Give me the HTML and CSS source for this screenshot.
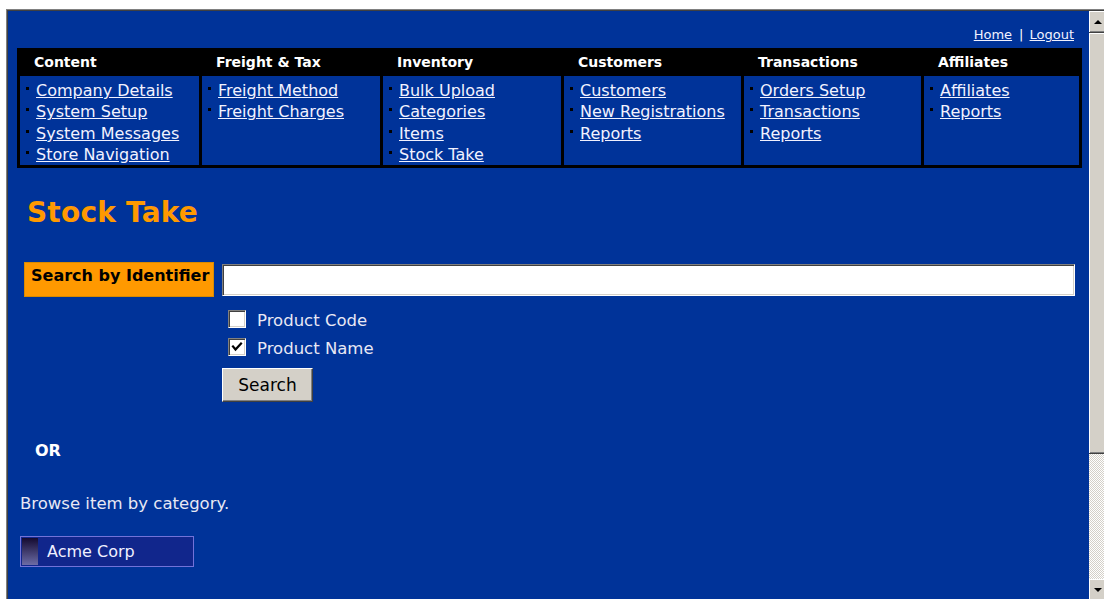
FILE: index.html
```html
<!DOCTYPE html>
<html lang="en">
<head>
<meta charset="utf-8">
<title>Stock Take</title>
<link rel="stylesheet" href="styles.css">
</head>
<body>
<div class="frame">
  <div class="frame-inner">
    <div class="page">
      <div class="toplinks"><a href="#">Home</a><span class="sep">|</span><a href="#">Logout</a></div>

      <div class="nav">
        <div class="nav-head">Content</div>
        <div class="nav-head">Freight &amp; Tax</div>
        <div class="nav-head">Inventory</div>
        <div class="nav-head">Customers</div>
        <div class="nav-head">Transactions</div>
        <div class="nav-head">Affiliates</div>

        <ul class="nav-cell">
          <li><a href="#">Company Details</a></li>
          <li><a href="#">System Setup</a></li>
          <li><a href="#">System Messages</a></li>
          <li><a href="#">Store Navigation</a></li>
        </ul>
        <ul class="nav-cell">
          <li><a href="#">Freight Method</a></li>
          <li><a href="#">Freight Charges</a></li>
        </ul>
        <ul class="nav-cell">
          <li><a href="#">Bulk Upload</a></li>
          <li><a href="#">Categories</a></li>
          <li><a href="#">Items</a></li>
          <li><a href="#">Stock Take</a></li>
        </ul>
        <ul class="nav-cell">
          <li><a href="#">Customers</a></li>
          <li><a href="#">New Registrations</a></li>
          <li><a href="#">Reports</a></li>
        </ul>
        <ul class="nav-cell">
          <li><a href="#">Orders Setup</a></li>
          <li><a href="#">Transactions</a></li>
          <li><a href="#">Reports</a></li>
        </ul>
        <ul class="nav-cell">
          <li><a href="#">Affiliates</a></li>
          <li><a href="#">Reports</a></li>
        </ul>
      </div>

      <h1 class="title">Stock Take</h1>

      <div class="search-row">
        <label class="search-label" for="ident">Search by Identifier</label>
        <input class="search-input" id="ident" type="text">
      </div>

      <div class="search-options">
        <label class="option">
          <span class="box"></span>
          <span class="option-text">Product Code</span>
        </label>
        <label class="option">
          <span class="box"><svg viewBox="0 0 14 14" width="14" height="14"><polyline points="3,6.5 5.5,9.5 11,3.5" fill="none" stroke="#000" stroke-width="2.2" stroke-linecap="square"/></svg></span>
          <span class="option-text">Product Name</span>
        </label>
        <button class="search-btn" type="button">Search</button>
      </div>

      <p class="or">OR</p>
      <p class="browse">Browse item by category.</p>

      <div class="category">
        <span class="cat-icon"></span>
        <span class="cat-name">Acme Corp</span>
      </div>
    </div>

    <div class="scrollbar">
      <div class="sb-btn"><span class="arrow-up"></span></div>
      <div class="sb-thumb"></div>
      <div class="sb-track"></div>
      <div class="sb-btn"><span class="arrow-down"></span></div>
    </div>
  </div>
</div>
</body>
</html>
```

FILE: styles.css
```css
html, body {
  margin: 0;
  padding: 0;
  background: #ffffff;
  overflow: hidden;
}

/* sunken frame holding the admin page */
.frame {
  margin: 9px 0 0 6px;
  width: 1100px;
  box-sizing: border-box;
  border-top: 1px solid #808080;
  border-left: 1px solid #808080;
}

.frame-inner {
  display: flex;
  height: 590px;
  border-top: 1px solid #404040;
  border-left: 1px solid #404040;
}

.page {
  width: 1081px;
  flex: none;
  box-sizing: border-box;
  padding: 0 7px 0 9px;
  background: #003399;
  font-family: "DejaVu Sans", Verdana, sans-serif;
  color: #eeeeff;
  overflow: hidden;
}

a {
  color: #f2f2ff;
  text-decoration: underline;
}

/* Home | Logout */
.toplinks {
  height: 37px;
  box-sizing: border-box;
  padding: 16px 8px 0 0;
  text-align: right;
  font-size: 13px;
  line-height: 16px;
}

.toplinks .sep {
  margin: 0 6px 0 7px;
  color: #ffffff;
}

/* main navigation table */
.nav {
  display: grid;
  grid-template-columns: 179px 178px 178px 177px 177px 155px;
  grid-template-rows: 22px 89px;
  gap: 3px;
  padding: 3px;
  background: #000000;
}

.nav-head {
  padding-left: 14px;
  font-size: 14px;
  font-weight: bold;
  line-height: 22px;
  color: #ffffff;
}

.nav-cell {
  margin: 0;
  padding: 4px 0 0 6px;
  list-style: none;
  background: #003399;
  font-size: 16px;
  line-height: 21.4px;
}

.nav-cell li::before {
  content: "";
  display: inline-block;
  width: 3px;
  height: 3px;
  margin-right: 7px;
  vertical-align: 6px;
  background: #000000;
}

.title {
  margin: 29px 0 0 10px;
  font-size: 28px;
  letter-spacing: 0.2px;
  line-height: 32px;
  font-weight: bold;
  color: #ff9900;
}

/* search by identifier */
.search-row {
  display: flex;
  align-items: flex-start;
  margin-top: 33px;
}

.search-label {
  width: 190px;
  height: 35px;
  box-sizing: border-box;
  margin-left: 7px;
  padding: 3px 0 0 6px;
  border: 1px solid #d98a00;
  background: #ff9900;
  color: #000000;
  font-size: 16px;
  font-weight: bold;
  line-height: 19px;
  white-space: nowrap;
}

.search-input {
  flex: 1;
  height: 32px;
  box-sizing: border-box;
  margin: 2px 7px 0 8px;
  padding: 0 4px;
  border: 1px solid;
  border-color: #808080 #ffffff #ffffff #808080;
  box-shadow: inset 1px 1px #404040, inset -1px -1px #d4d0c8;
  background: #ffffff;
  font-family: "DejaVu Sans", sans-serif;
  font-size: 16px;
  outline: none;
}

.search-options {
  display: flex;
  flex-direction: column;
  align-items: flex-start;
  margin: 13px 0 0 205px;
}

.option {
  display: flex;
  align-items: flex-start;
  height: 18px;
  margin: 0 0 10px 6px;
  font-size: 16.5px;
  line-height: 18px;
  color: #e8e8f4;
}

.box {
  width: 18px;
  height: 18px;
  box-sizing: border-box;
  display: flex;
  align-items: center;
  justify-content: center;
  border: 1px solid;
  border-color: #808080 #ffffff #ffffff #808080;
  box-shadow: inset 1px 1px #404040, inset -1px -1px #d4d0c8;
  background: #ffffff;
}

.option-text {
  margin: 2px 0 0 11px;
}

.search-btn {
  width: 91px;
  height: 34px;
  margin-top: 2px;
  padding: 0;
  border: 1px solid;
  border-color: #ffffff #404040 #404040 #ffffff;
  box-shadow: inset -1px -1px #808080, inset 1px 1px #d4d0c8;
  background: #d4d0c8;
  color: #000000;
  font-family: "DejaVu Sans", sans-serif;
  font-size: 17px;
}

.or {
  margin: 39px 0 0 18px;
  font-size: 16px;
  font-weight: bold;
  line-height: 19px;
  color: #ffffff;
}

.browse {
  margin: 34px 0 0 3px;
  font-size: 16.5px;
  line-height: 19px;
  color: #e8e8f4;
}

/* category chooser */
.category {
  display: flex;
  align-items: center;
  width: 174px;
  height: 31px;
  box-sizing: border-box;
  margin: 23px 0 0 3px;
  padding: 0 1px;
  border: 1px solid #7272d8;
  background: #11268c;
}

.cat-icon {
  width: 16px;
  height: 27px;
  background: linear-gradient(#140a30, #6c6ca6);
}

.cat-name {
  margin-left: 9px;
  font-size: 16px;
  color: #f0f0ff;
}

/* classic vertical scrollbar */
.scrollbar {
  width: 17px;
  flex: none;
  display: flex;
  flex-direction: column;
  background: #d4d0c8;
}

.sb-btn,
.sb-thumb {
  box-sizing: border-box;
  background: #d4d0c8;
  box-shadow: inset -1px -1px #404040, inset 1px 1px #ffffff, inset -2px -2px #808080, inset 2px 2px #d4d0c8;
}

.sb-btn {
  height: 22px;
  display: flex;
  align-items: center;
  justify-content: center;
}

.sb-thumb {
  height: 421px;
}

.sb-track {
  flex: 1;
  background: repeating-conic-gradient(#d4d0c8 0 25%, #ffffff 0 50%) 0 0 / 2px 2px;
}

.arrow-up,
.arrow-down {
  width: 0;
  height: 0;
  border-left: 4px solid transparent;
  border-right: 4px solid transparent;
}

.arrow-up {
  border-bottom: 4px solid #000000;
}

.arrow-down {
  border-top: 4px solid #000000;
}
```
